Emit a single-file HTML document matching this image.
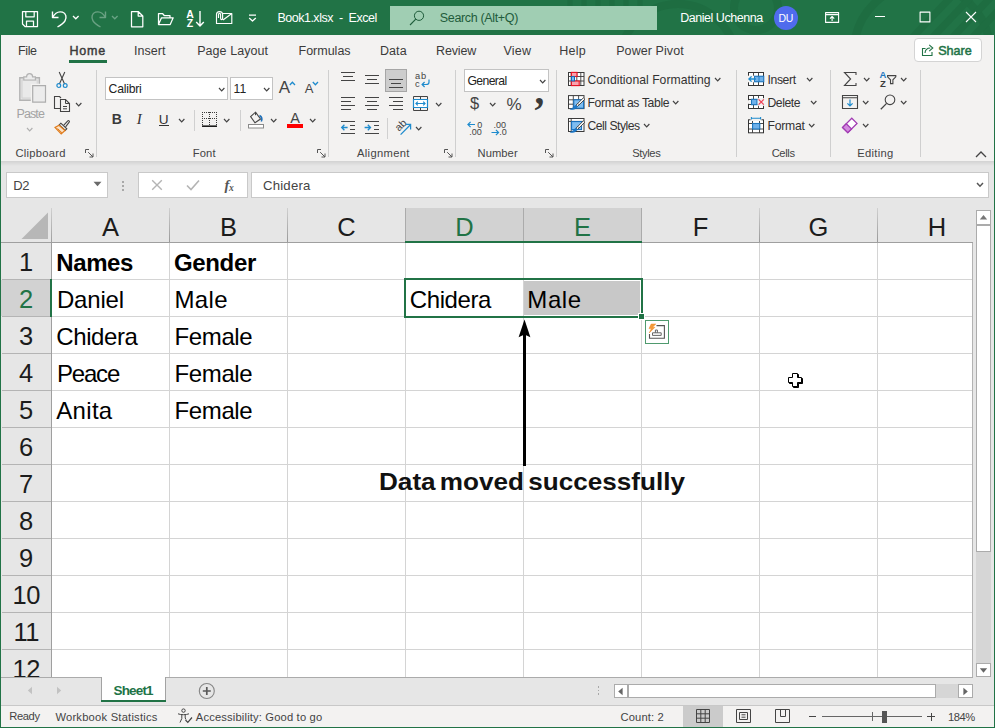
<!DOCTYPE html>
<html><head><meta charset="utf-8"><title>Book1.xlsx - Excel</title>
<style>
*{box-sizing:border-box}
html,body{margin:0;padding:0}
body{width:995px;height:728px;position:relative;overflow:hidden;background:#e6e6e6;font-family:"Liberation Sans",sans-serif;font-size:12px;color:#262626}
.a,.t,svg{position:absolute}
svg{overflow:visible}
.t{white-space:pre;line-height:1}
.c{position:absolute;font-size:24px;line-height:1;white-space:nowrap;color:#000}
</style></head><body>
<div class="a" style="left:0px;top:0px;width:995px;height:35px;background:#217346;"></div>
<svg style="left:560px;top:0px;overflow:hidden" width="435" height="35" viewBox="0 0 435 35"><g fill="none" stroke="#1d6b40" stroke-width="8" opacity="0.75"><circle cx="196" cy="8" r="22"/><circle cx="118" cy="62" r="58"/><circle cx="362" cy="52" r="68"/><path d="M352 38L392 -4M372 38L412 -4M392 38L432 -4M412 38L452 -4" stroke-width="7"/><path d="M10 -2V8M24 -2V8M38 -2V8M52 -2V8M66 -2V8M80 -2V8" stroke-width="5"/></g></svg>
<svg style="left:21px;top:10px" width="18" height="18" viewBox="0 0 18 18" ><path d="M1.5 1.5H16.5V16.5H4L1.5 14Z M4.8 1.5V6.8H13.2V1.5 M5.5 16.5V11H12.5V16.5" fill="none" stroke="#fff" stroke-width="1.25" stroke-linejoin="round" opacity="1"/></svg>
<svg style="left:51px;top:10px" width="17" height="18" viewBox="0 0 17 18" ><path d="M1.5 1.5V7.5H7.5 M1.5 7.5C4 3 8 1.2 11.5 2.2C15 3.3 16 7.5 14 10.8C12.5 13.3 9.5 15.2 6.5 17" fill="none" stroke="#fff" stroke-width="1.4" stroke-linejoin="round" opacity="1"/></svg>
<svg style="left:71.6px;top:15.2px" width="7.6" height="4.8" viewBox="0 0 7.6 4.8" ><path d="M1 1L3.8 3.8L6.6 1" fill="none" stroke="#fff" stroke-width="1.3"/></svg>
<svg style="left:90px;top:10px" width="17" height="18" viewBox="0 0 17 18" ><path d="M15.5 1.5V7.5H9.5 M15.5 7.5C13 3 9 1.2 5.5 2.2C2 3.3 1 7.5 3 10.8C4.5 13.3 7.5 15.2 10.5 17" fill="none" stroke="#fff" stroke-width="1.4" stroke-linejoin="round" opacity="0.33"/></svg>
<svg style="left:111.0px;top:15.2px" width="7.6" height="4.8" viewBox="0 0 7.6 4.8" ><path d="M1 1L3.8 3.8L6.6 1" fill="none" stroke="#6aa385" stroke-width="1.3"/></svg>
<svg style="left:130px;top:10px" width="14" height="18" viewBox="0 0 14 18" ><path d="M1.5 1.5H8.2L12.8 6V16.8H1.5Z M8.2 1.5V6H12.8" fill="none" stroke="#fff" stroke-width="1.25" stroke-linejoin="round" opacity="1"/></svg>
<svg style="left:157px;top:12px" width="18" height="14" viewBox="0 0 18 14" ><path d="M1.5 12.5V1.5H5.5L7.2 3.5H13V5.8 M1.5 12.5L4.5 5.8H16.2L13.2 12.5Z" fill="none" stroke="#fff" stroke-width="1.25" stroke-linejoin="round" opacity="1"/></svg>
<div class="t" style="left:186.30px;top:9.00px;font-size:10.5px;color:#fff;font-weight:700;">A</div>
<div class="t" style="left:186.80px;top:18.00px;font-size:10.5px;color:#fff;font-weight:700;">Z</div>
<svg style="left:195px;top:10px" width="10" height="18" viewBox="0 0 10 18" ><path d="M5 1V16 M1.2 12L5 16L8.8 12" fill="none" stroke="#fff" stroke-width="1.4" stroke-linejoin="round" opacity="1"/></svg>
<svg style="left:215px;top:10px" width="19" height="15" viewBox="0 0 19 15" ><path d="M7.8 3.5H16.8V13.5H1.5V9.8 M16.8 3.5L8 10 M1.5 9.8V4.5C1.5 0.6 7.6 0.6 7.6 4.5V8.3C7.6 10 5.6 10 5.6 8.3V4.8C5.6 2.9 3.5 2.9 3.5 4.8V8" fill="none" stroke="#fff" stroke-width="1.15" stroke-linejoin="round" opacity="1"/></svg>
<svg style="left:248px;top:14px" width="9" height="8" viewBox="0 0 9 8" ><path d="M1 1.2H8 M1.2 4L4.5 7L7.8 4" fill="none" stroke="#fff" stroke-width="1.3" stroke-linejoin="round" opacity="1"/></svg>
<div class="t" style="left:277.40px;top:12.00px;font-size:12.5px;color:#fff;letter-spacing:-0.489px;">Book1.xlsx  -  Excel</div>
<div class="a" style="left:390px;top:6px;width:267px;height:24px;background:#a0ceb3;"></div>
<svg style="left:409px;top:10px" width="16" height="16" viewBox="0 0 16 16" ><circle cx="10" cy="5.8" r="4.6" fill="none" stroke="#1f5c3b" stroke-width="1"/><path d="M6.8 9.2L1 15" stroke="#1f5c3b" stroke-width="1.1"/></svg>
<div class="t" style="left:439.80px;top:12.00px;font-size:12.5px;color:#1f5c3b;letter-spacing:-0.344px;">Search (Alt+Q)</div>
<div class="t" style="left:680.20px;top:12.00px;font-size:12.5px;color:#fff;letter-spacing:-0.461px;">Daniel Uchenna</div>
<div class="a" style="left:774px;top:6px;width:24px;height:24px;background:#4f6bed;border-radius:12px"></div>
<div class="t" style="left:778.50px;top:13.00px;font-size:10.5px;color:#fff;letter-spacing:-0.336px;">DU</div>
<svg style="left:825px;top:12px" width="15" height="12" viewBox="0 0 15 12" ><path d="M0.6 0.6H13.6V10.4H0.6Z M0.6 2.6H13.6" fill="none" stroke="#fff" stroke-width="1.1" stroke-linejoin="round" opacity="1"/><path d="M7.1 9V4.6M5 6.6L7.1 4.5L9.2 6.6" fill="none" stroke="#fff" stroke-width="1.1" stroke-linejoin="round" opacity="1"/></svg>
<div class="a" style="left:874.5px;top:16px;width:10.5px;height:1px;background:#fff;"></div>
<svg style="left:919px;top:11px" width="12" height="12" viewBox="0 0 12 12" ><path d="M1.1 1.1H10.9V10.9H1.1Z" fill="none" stroke="#fff" stroke-width="1.1" stroke-linejoin="round" opacity="1"/></svg>
<svg style="left:965px;top:11px" width="12" height="12" viewBox="0 0 12 12" ><path d="M1 1L11 11M11 1L1 11" fill="none" stroke="#fff" stroke-width="1.1" stroke-linejoin="round" opacity="1"/></svg>
<div class="a" style="left:1px;top:35px;width:993px;height:126px;background:#f3f2f1;"></div>
<div class="a" style="left:1px;top:161px;width:993px;height:5px;background:linear-gradient(#d2d2d2,#e6e6e6);"></div>
<div class="t" style="left:18.10px;top:45.00px;font-size:12.5px;color:#3b3b3b;letter-spacing:-0.439px;">File</div>
<div class="t" style="left:69.50px;top:45.00px;font-size:12.5px;color:#3b3b3b;letter-spacing:0.789px;-webkit-text-stroke:0.45px #3b3b3b;">Home</div>
<div class="a" style="left:69px;top:60px;width:38px;height:3px;background:#217346;"></div>
<div class="t" style="left:133.90px;top:45.00px;font-size:12.5px;color:#3b3b3b;letter-spacing:0.089px;">Insert</div>
<div class="t" style="left:197.20px;top:45.00px;font-size:12.5px;color:#3b3b3b;letter-spacing:0.063px;">Page Layout</div>
<div class="t" style="left:298.50px;top:45.00px;font-size:12.5px;color:#3b3b3b;">Formulas</div>
<div class="t" style="left:379.90px;top:45.00px;font-size:12.5px;color:#3b3b3b;letter-spacing:0.098px;">Data</div>
<div class="t" style="left:436.00px;top:45.00px;font-size:12.5px;color:#3b3b3b;letter-spacing:-0.150px;">Review</div>
<div class="t" style="left:503.60px;top:45.00px;font-size:12.5px;color:#3b3b3b;letter-spacing:0.156px;">View</div>
<div class="t" style="left:559.30px;top:45.00px;font-size:12.5px;color:#3b3b3b;letter-spacing:0.195px;">Help</div>
<div class="t" style="left:616.20px;top:45.00px;font-size:12.5px;color:#3b3b3b;letter-spacing:0.082px;">Power Pivot</div>
<div class="a" style="left:914px;top:38px;width:68px;height:24px;background:#fff;border:1px solid #d4d4d4;border-radius:4px"></div>
<svg style="left:921px;top:43px" width="14" height="14" viewBox="0 0 14 14" ><path d="M4.5 5.5H1.5V12.5H11V9" fill="none" stroke="#217346" stroke-width="1.1"/><path d="M4 10C4.3 6.6 6.5 5 9.3 5" fill="none" stroke="#217346" stroke-width="1.1"/><path d="M8.2 1.8L11.8 5L8.2 8.2" fill="none" stroke="#217346" stroke-width="1.1"/></svg>
<div class="t" style="left:938.20px;top:45.00px;font-size:12.6px;color:#217346;-webkit-text-stroke:0.5px #217346;">Share</div>
<svg style="left:974.5px;top:150px" width="12" height="8" viewBox="0 0 12 8" ><path d="M1 7L6 2L11 7" fill="none" stroke="#444" stroke-width="1.3"/></svg>
<div class="a" style="left:96px;top:70px;width:1px;height:87px;background:#cfcfcf;"></div>
<div class="a" style="left:328px;top:70px;width:1px;height:87px;background:#cfcfcf;"></div>
<div class="a" style="left:455px;top:70px;width:1px;height:87px;background:#cfcfcf;"></div>
<div class="a" style="left:556px;top:70px;width:1px;height:87px;background:#cfcfcf;"></div>
<div class="a" style="left:736px;top:70px;width:1px;height:87px;background:#cfcfcf;"></div>
<div class="a" style="left:830px;top:70px;width:1px;height:87px;background:#cfcfcf;"></div>
<div class="a" style="left:920px;top:70px;width:1px;height:87px;background:#cfcfcf;"></div>
<div class="t" style="left:15.40px;top:148.00px;font-size:11.2px;color:#444;letter-spacing:0.268px;">Clipboard</div>
<div class="t" style="left:192.70px;top:148.00px;font-size:11.2px;color:#444;letter-spacing:0.177px;">Font</div>
<div class="t" style="left:357.00px;top:148.00px;font-size:11.2px;color:#444;letter-spacing:0.328px;">Alignment</div>
<div class="t" style="left:477.50px;top:148.00px;font-size:11.2px;color:#444;letter-spacing:0.067px;">Number</div>
<div class="t" style="left:632.30px;top:148.00px;font-size:11.2px;color:#444;letter-spacing:-0.395px;">Styles</div>
<div class="t" style="left:771.70px;top:148.00px;font-size:11.2px;color:#444;letter-spacing:-0.395px;">Cells</div>
<div class="t" style="left:857.20px;top:148.00px;font-size:11.2px;color:#444;letter-spacing:0.297px;">Editing</div>
<svg style="left:85px;top:149px" width="9" height="9" viewBox="0 0 9 9" ><path d="M0.5 4V0.5H4M3.2 3.2L8 8M8 4.5V8H4.5" fill="none" stroke="#555" stroke-width="1"/></svg>
<svg style="left:317px;top:149px" width="9" height="9" viewBox="0 0 9 9" ><path d="M0.5 4V0.5H4M3.2 3.2L8 8M8 4.5V8H4.5" fill="none" stroke="#555" stroke-width="1"/></svg>
<svg style="left:444px;top:149px" width="9" height="9" viewBox="0 0 9 9" ><path d="M0.5 4V0.5H4M3.2 3.2L8 8M8 4.5V8H4.5" fill="none" stroke="#555" stroke-width="1"/></svg>
<svg style="left:545px;top:149px" width="9" height="9" viewBox="0 0 9 9" ><path d="M0.5 4V0.5H4M3.2 3.2L8 8M8 4.5V8H4.5" fill="none" stroke="#555" stroke-width="1"/></svg>
<svg style="left:18px;top:72px" width="30" height="32" viewBox="0 0 30 32" ><path d="M1.8 5.8H21.4V28.2H1.8Z" fill="#e2e2e2" stroke="#b3b3b3" stroke-width="1.4" /><path d="M4 8H19.2V26H4Z" fill="#e9e9e9" stroke="#d2d2d2" stroke-width="1" /><path d="M5.8 8V4.8H8.6C8.6 0.6 14.6 0.6 14.6 4.8H17.4V8Z" fill="#ececec" stroke="#b3b3b3" stroke-width="1.2" /><path d="M13.6 12.6H28.4V31.2H13.6Z" fill="#f3f2f1" stroke="#f3f2f1" stroke-width="1.6" /><path d="M14.7 13.7H27.5V30.2H14.7Z" fill="#ececec" stroke="#adadad" stroke-width="1.2" /></svg>
<div class="t" style="left:16.50px;top:108.00px;font-size:12.5px;color:#a3a3a3;letter-spacing:-0.894px;">Paste</div>
<svg style="left:25.8px;top:126.9px" width="7.4" height="4.8" viewBox="0 0 7.4 4.8" ><path d="M1 1L3.7 3.8L6.4 1" fill="none" stroke="#b0b0b0" stroke-width="1.2"/></svg>
<svg style="left:56px;top:71px" width="12" height="18" viewBox="0 0 12 18" ><path d="M3.2 1L8.6 13 M8.8 1L3.4 13" fill="none" stroke="#444" stroke-width="1.1" /><circle cx="2.8" cy="14.6" r="1.9" fill="none" stroke="#1e8bcd" stroke-width="1.2"/><circle cx="9.2" cy="14.6" r="1.9" fill="none" stroke="#1e8bcd" stroke-width="1.2"/></svg>
<svg style="left:53px;top:95px" width="18" height="18" viewBox="0 0 18 18" ><path d="M7 13.5H1.5V1.5H6.5L8 3" fill="none" stroke="#444" stroke-width="1.1" /><path d="M7.5 4.5H12.5L16.5 8.5V16.5H7.5Z" fill="#f3f2f1" stroke="#444" stroke-width="1.1" /><path d="M12.5 4.5V8.5H16.5 M10 11.5H14 M10 13.8H14" fill="none" stroke="#444" stroke-width="1" /></svg>
<svg style="left:75.3px;top:101.8px" width="7.4" height="4.8" viewBox="0 0 7.4 4.8" ><path d="M1 1L3.7 3.8L6.4 1" fill="none" stroke="#444" stroke-width="1.2"/></svg>
<svg style="left:54px;top:119px" width="17" height="16" viewBox="0 0 17 16" ><path d="M9.8 6.2L13.8 1.8C14.6 1 16 2.3 15.2 3.2L11.6 7.8" fill="none" stroke="#444" stroke-width="1.1" /><path d="M6.8 4.2L12.8 9.8L11.2 11.5L5.2 6Z" fill="none" stroke="#444" stroke-width="1.1" /><path d="M5 6.2L1 8.5L7.2 15L11 11.5Z" fill="#fbe3c8" stroke="#e07b1a" stroke-width="1.2" /><path d="M3.5 9.5L8 13.8" fill="none" stroke="#e07b1a" stroke-width="1" /></svg>
<div class="a" style="left:105px;top:77px;width:123px;height:23px;background:#fff;border:1px solid #c3c3c3"></div>
<div class="t" style="left:108.60px;top:83.00px;font-size:12.2px;color:#222;letter-spacing:-0.235px;">Calibri</div>
<svg style="left:217.6px;top:87.0px" width="7.4" height="4.8" viewBox="0 0 7.4 4.8" ><path d="M1 1L3.7 3.8L6.4 1" fill="none" stroke="#444" stroke-width="1.2"/></svg>
<div class="a" style="left:230px;top:77px;width:43px;height:23px;background:#fff;border:1px solid #c3c3c3"></div>
<div class="t" style="left:233.50px;top:83.00px;font-size:12.2px;color:#222;letter-spacing:0.172px;">11</div>
<svg style="left:262.5px;top:87.0px" width="7.4" height="4.8" viewBox="0 0 7.4 4.8" ><path d="M1 1L3.7 3.8L6.4 1" fill="none" stroke="#444" stroke-width="1.2"/></svg>
<div class="t" style="left:278.80px;top:79.00px;font-size:17px;color:#444;">A</div>
<svg style="left:288.5px;top:80.5px" width="7" height="5" viewBox="0 0 7 5" ><path d="M0.8 4L3.4 1.2L6 4" fill="none" stroke="#1e8bcd" stroke-width="1.3" /></svg>
<div class="t" style="left:304.80px;top:82.00px;font-size:13px;color:#444;">A</div>
<svg style="left:312.3px;top:81px" width="7" height="5" viewBox="0 0 7 5" ><path d="M0.8 1L3.4 3.8L6 1" fill="none" stroke="#1e8bcd" stroke-width="1.3" /></svg>
<div class="t" style="left:111.80px;top:112.00px;font-size:14px;color:#3a3a3a;font-weight:700;">B</div>
<div class="t" style="left:136.80px;top:112.00px;font-size:15px;color:#333;font-style:italic;font-family:'Liberation Serif',serif;">I</div>
<div class="t" style="left:158.80px;top:113.00px;font-size:13.6px;color:#333;">U</div>
<div class="a" style="left:159px;top:125px;width:9.5px;height:1px;background:#333;"></div>
<svg style="left:177.6px;top:118.0px" width="7.4" height="4.8" viewBox="0 0 7.4 4.8" ><path d="M1 1L3.7 3.8L6.4 1" fill="none" stroke="#444" stroke-width="1.2"/></svg>
<div class="a" style="left:194px;top:110px;width:1px;height:21px;background:#d0d0d0;"></div>
<svg style="left:202px;top:112px" width="15" height="16" viewBox="0 0 15 16" ><path d="M0 0.5H15M0 6.5H15M0.5 0V13M7.5 0V13M14.5 0V13" fill="none" stroke="#3a3a3a" stroke-width="1" stroke-dasharray="1 1" shape-rendering="crispEdges"/><path d="M0 14.2H15" stroke="#1a1a1a" stroke-width="1.6"/></svg>
<svg style="left:223.3px;top:118.0px" width="7.4" height="4.8" viewBox="0 0 7.4 4.8" ><path d="M1 1L3.7 3.8L6.4 1" fill="none" stroke="#444" stroke-width="1.2"/></svg>
<div class="a" style="left:240px;top:110px;width:1px;height:21px;background:#d0d0d0;"></div>
<svg style="left:247px;top:111px" width="18" height="18" viewBox="0 0 18 18" ><path d="M8.5 1.2L13.5 8L8 11.8L3.6 5.5Z" fill="none" stroke="#444" stroke-width="1.1" /><path d="M8.5 1.2V4.2" fill="none" stroke="#444" stroke-width="1" /><path d="M12.5 4.5C15 6 15.2 8.5 14.3 10.5" fill="none" stroke="#1e6fb8" stroke-width="1.6" /><rect x="1.5" y="13.5" width="15" height="3.5" fill="#fff" stroke="#8a8a8a" stroke-width="1"/></svg>
<svg style="left:269.7px;top:118.0px" width="7.4" height="4.8" viewBox="0 0 7.4 4.8" ><path d="M1 1L3.7 3.8L6.4 1" fill="none" stroke="#444" stroke-width="1.2"/></svg>
<div class="t" style="left:290.20px;top:111.00px;font-size:14.5px;color:#444;">A</div>
<div class="a" style="left:287px;top:124px;width:16px;height:4px;background:#ff0000;"></div>
<svg style="left:308.8px;top:118.0px" width="7.4" height="4.8" viewBox="0 0 7.4 4.8" ><path d="M1 1L3.7 3.8L6.4 1" fill="none" stroke="#444" stroke-width="1.2"/></svg>
<div class="a" style="left:341px;top:72px;width:14px;height:1px;background:#444;"></div>
<div class="a" style="left:343px;top:76px;width:10px;height:1px;background:#444;"></div>
<div class="a" style="left:341px;top:80px;width:14px;height:1px;background:#444;"></div>
<div class="a" style="left:365px;top:75px;width:14px;height:1px;background:#444;"></div>
<div class="a" style="left:367px;top:79px;width:10px;height:1px;background:#444;"></div>
<div class="a" style="left:365px;top:83px;width:14px;height:1px;background:#444;"></div>
<div class="a" style="left:385px;top:69px;width:22px;height:23px;background:#cdcdcd;border:1px solid #a6a6a6"></div>
<div class="a" style="left:389px;top:79px;width:14px;height:1px;background:#444;"></div>
<div class="a" style="left:391px;top:83px;width:10px;height:1px;background:#444;"></div>
<div class="a" style="left:389px;top:87px;width:14px;height:1px;background:#444;"></div>
<div class="t" style="left:415.00px;top:72.00px;font-size:9.3px;color:#444;letter-spacing:0.928px;">ab</div>
<div class="t" style="left:415.00px;top:80.00px;font-size:9.3px;color:#444;">c</div>
<svg style="left:421px;top:79px" width="9" height="9" viewBox="0 0 9 9" ><path d="M8 0.5V3.2C8 5.2 6.5 5.5 5 5.5H1.2 M3.6 3L1.1 5.5L3.6 8" fill="none" stroke="#1e8bcd" stroke-width="1.2" /></svg>
<div class="a" style="left:341px;top:97px;width:14px;height:1px;background:#444;"></div>
<div class="a" style="left:341px;top:101px;width:10px;height:1px;background:#444;"></div>
<div class="a" style="left:341px;top:105px;width:14px;height:1px;background:#444;"></div>
<div class="a" style="left:341px;top:109px;width:10px;height:1px;background:#444;"></div>
<div class="a" style="left:365px;top:97px;width:14px;height:1px;background:#444;"></div>
<div class="a" style="left:367px;top:101px;width:10px;height:1px;background:#444;"></div>
<div class="a" style="left:365px;top:105px;width:14px;height:1px;background:#444;"></div>
<div class="a" style="left:367px;top:109px;width:10px;height:1px;background:#444;"></div>
<div class="a" style="left:389px;top:97px;width:14px;height:1px;background:#444;"></div>
<div class="a" style="left:393px;top:101px;width:10px;height:1px;background:#444;"></div>
<div class="a" style="left:389px;top:105px;width:14px;height:1px;background:#444;"></div>
<div class="a" style="left:393px;top:109px;width:10px;height:1px;background:#444;"></div>
<svg style="left:413px;top:96px" width="16" height="15" viewBox="0 0 16 15" ><path d="M0.5 0.5H14.5V14.5H0.5Z M7.5 0.5V3.5 M7.5 11.5V14.5" fill="none" stroke="#444" stroke-width="1" /><path d="M0.5 3.5H14.5V11.5H0.5Z" fill="#fff" stroke="#1e8bcd" stroke-width="1.2" /><path d="M3 7.5H12 M4.8 5.6L2.9 7.5L4.8 9.4 M10.2 5.6L12.1 7.5L10.2 9.4" fill="none" stroke="#1e8bcd" stroke-width="1.1" /></svg>
<svg style="left:434.8px;top:101.9px" width="7.4" height="4.8" viewBox="0 0 7.4 4.8" ><path d="M1 1L3.7 3.8L6.4 1" fill="none" stroke="#444" stroke-width="1.2"/></svg>
<div class="a" style="left:341px;top:121px;width:14px;height:1px;background:#444;"></div>
<div class="a" style="left:350px;top:125px;width:5px;height:1px;background:#444;"></div>
<div class="a" style="left:350px;top:129px;width:5px;height:1px;background:#444;"></div>
<div class="a" style="left:341px;top:133px;width:14px;height:1px;background:#444;"></div>
<svg style="left:341px;top:123px" width="8" height="9" viewBox="0 0 8 9" ><path d="M0.8 4.5H6.6 M3.4 1.8L0.7 4.5L3.4 7.2" fill="none" stroke="#1e8bcd" stroke-width="1.3" /></svg>
<div class="a" style="left:365px;top:121px;width:14px;height:1px;background:#444;"></div>
<div class="a" style="left:374px;top:125px;width:5px;height:1px;background:#444;"></div>
<div class="a" style="left:374px;top:129px;width:5px;height:1px;background:#444;"></div>
<div class="a" style="left:365px;top:133px;width:14px;height:1px;background:#444;"></div>
<svg style="left:364px;top:123px" width="8" height="9" viewBox="0 0 8 9" ><path d="M0.6 4.5H6.4 M3.8 1.8L6.5 4.5L3.8 7.2" fill="none" stroke="#1e8bcd" stroke-width="1.3" /></svg>
<div class="a" style="left:387px;top:118px;width:1px;height:21px;background:#d0d0d0;"></div>
<div class="t" style="left:394.5px;top:119.5px;width:11px;height:11px;font-size:10.5px;line-height:11px;text-align:center;color:#444;transform:rotate(-45deg)">ab</div>
<svg style="left:399px;top:122px" width="13" height="14" viewBox="0 0 13 14" ><path d="M1.6 12.6L11.4 2.8 M6.4 2.4H11.6V7.6" fill="none" stroke="#1e8bcd" stroke-width="1.25" /></svg>
<svg style="left:414.9px;top:126.0px" width="7.4" height="4.8" viewBox="0 0 7.4 4.8" ><path d="M1 1L3.7 3.8L6.4 1" fill="none" stroke="#444" stroke-width="1.2"/></svg>
<div class="a" style="left:464px;top:69px;width:85px;height:23px;background:#fff;border:1px solid #c3c3c3"></div>
<div class="t" style="left:467.40px;top:75.00px;font-size:12.2px;color:#222;letter-spacing:-0.594px;">General</div>
<svg style="left:538.6px;top:78.8px" width="7.4" height="4.8" viewBox="0 0 7.4 4.8" ><path d="M1 1L3.7 3.8L6.4 1" fill="none" stroke="#444" stroke-width="1.2"/></svg>
<div class="t" style="left:470.00px;top:95.00px;font-size:16.5px;color:#444;">$</div>
<svg style="left:488.6px;top:101.8px" width="7.4" height="4.8" viewBox="0 0 7.4 4.8" ><path d="M1 1L3.7 3.8L6.4 1" fill="none" stroke="#444" stroke-width="1.2"/></svg>
<div class="t" style="left:506.60px;top:96.00px;font-size:17px;color:#444;letter-spacing:-0.325px;">%</div>
<div class="t" style="left:534.60px;top:71.00px;font-size:39px;color:#3a3a3a;font-weight:700;font-family:'Liberation Serif',serif;">,</div>
<div class="t" style="left:477.20px;top:121.00px;font-size:9px;color:#444;">0</div>
<div class="t" style="left:469.20px;top:128.00px;font-size:9px;color:#444;">.00</div>
<svg style="left:466.5px;top:121px" width="9" height="7" viewBox="0 0 9 7" ><path d="M1 3.5H8 M3.6 0.8L0.9 3.5L3.6 6.2" fill="none" stroke="#1e8bcd" stroke-width="1.2" /></svg>
<div class="t" style="left:493.50px;top:121.00px;font-size:9px;color:#444;">.00</div>
<div class="t" style="left:499.30px;top:128.00px;font-size:9px;color:#444;">.0</div>
<svg style="left:490.5px;top:128.5px" width="9" height="7" viewBox="0 0 9 7" ><path d="M0.5 3.5H7.5 M4.9 0.8L7.6 3.5L4.9 6.2" fill="none" stroke="#1e8bcd" stroke-width="1.2" /></svg>
<svg style="left:568px;top:72px" width="17" height="14" viewBox="0 0 17 14" ><rect x="0.5" y="0.5" width="15.5" height="13" fill="#fff" stroke="#3b3b3b"/><path d="M3.2 0.5V13.5M8.8 0.5V13.5M12.8 0.5V13.5M0.5 4.5H16M0.5 9H16" fill="none" stroke="#3b3b3b" stroke-width="0.9" /><rect x="3.4" y="0.4" width="5.6" height="4.1" fill="#f9a3ad" stroke="#e81123" stroke-width="1.1"/><rect x="3.4" y="9" width="7.8" height="4.6" fill="#f9a3ad" stroke="#e81123" stroke-width="1.1"/><rect x="3.5" y="4.6" width="3" height="4.3" fill="#7fbdf0" stroke="#0f6cbd" stroke-width="1"/></svg>
<div class="t" style="left:587.50px;top:74.00px;font-size:12.2px;color:#333;letter-spacing:0.022px;">Conditional Formatting</div>
<svg style="left:713.6px;top:77.4px" width="7.4" height="4.8" viewBox="0 0 7.4 4.8" ><path d="M1 1L3.7 3.8L6.4 1" fill="none" stroke="#444" stroke-width="1.2"/></svg>
<svg style="left:568px;top:95px" width="18" height="16" viewBox="0 0 18 16" ><rect x="0.5" y="0.6" width="15.5" height="13" fill="#fff" stroke="#3b3b3b"/><path d="M5.3 0.6V13.6M10.6 0.6V4.8M0.5 4.8H16M0.5 9.2H5.3" fill="none" stroke="#3b3b3b" stroke-width="0.9" /><rect x="5.8" y="4.8" width="9.8" height="8.4" fill="#7fbdf0" stroke="#0f6cbd" stroke-width="1"/><path d="M16.8 4.2L9.6 11.4L8.2 10L15.4 2.8Z" fill="#fff" stroke="#3b3b3b" stroke-width="0.9" /><path d="M11.2 9.8L9.8 8.4" fill="none" stroke="#3b3b3b" stroke-width="0.8" /><path d="M2.2 14.2C5 15 8 14.2 9.4 11.6L8 10.2C6.4 10.4 5.6 13.2 2.2 14.2Z" fill="#1e78c8" stroke="#0f6cbd" stroke-width="0.5" /></svg>
<div class="t" style="left:587.50px;top:97.00px;font-size:12.2px;color:#333;letter-spacing:-0.364px;">Format as Table</div>
<svg style="left:672.0px;top:99.7px" width="7.4" height="4.8" viewBox="0 0 7.4 4.8" ><path d="M1 1L3.7 3.8L6.4 1" fill="none" stroke="#444" stroke-width="1.2"/></svg>
<svg style="left:568px;top:118px" width="18" height="16" viewBox="0 0 18 16" ><rect x="0.5" y="0.5" width="15.5" height="13" fill="#fff" stroke="#3b3b3b"/><path d="M3.2 0.5V13.5M0.5 3.4H16" fill="none" stroke="#3b3b3b" stroke-width="0.9" /><rect x="3.6" y="3.6" width="10" height="8" fill="#7fbdf0" stroke="#0f6cbd" stroke-width="1"/><path d="M16.8 4.2L9.6 11.4L8.2 10L15.4 2.8Z" fill="#fff" stroke="#3b3b3b" stroke-width="0.9" /><path d="M11.2 9.8L9.8 8.4" fill="none" stroke="#3b3b3b" stroke-width="0.8" /><path d="M2.2 14.2C5 15 8 14.2 9.4 11.6L8 10.2C6.4 10.4 5.6 13.2 2.2 14.2Z" fill="#1e78c8" stroke="#0f6cbd" stroke-width="0.5" /></svg>
<div class="t" style="left:587.50px;top:120.00px;font-size:12.2px;color:#333;letter-spacing:-0.498px;">Cell Styles</div>
<svg style="left:643.0px;top:123.4px" width="7.4" height="4.8" viewBox="0 0 7.4 4.8" ><path d="M1 1L3.7 3.8L6.4 1" fill="none" stroke="#444" stroke-width="1.2"/></svg>
<svg style="left:748px;top:72px" width="17" height="14" viewBox="0 0 17 14" ><rect x="0.5" y="0.5" width="15" height="13" fill="#fff" stroke="#333"/><path d="M5.5 0.5V13.5M10.5 0.5V13.5M0.5 4.5H15.5M0.5 9.5H15.5" fill="none" stroke="#333" stroke-width="0.9" /><rect x="-0.5" y="3.7" width="7" height="6.6" fill="#f3f2f1"/><rect x="6.5" y="4.2" width="9.3" height="5.6" fill="#6fb1ea" stroke="#1e78c0" stroke-width="1"/><path d="M11 4.2V9.8" fill="none" stroke="#1e78c0" stroke-width="0.9" /><path d="M0.8 7H8 M3.6 4.4L0.9 7L3.6 9.6" fill="none" stroke="#1e8bcd" stroke-width="1.3" /></svg>
<div class="t" style="left:767.50px;top:74.00px;font-size:12.2px;color:#333;letter-spacing:-0.381px;">Insert</div>
<svg style="left:805.8px;top:77.4px" width="7.4" height="4.8" viewBox="0 0 7.4 4.8" ><path d="M1 1L3.7 3.8L6.4 1" fill="none" stroke="#444" stroke-width="1.2"/></svg>
<svg style="left:748px;top:95px" width="17" height="15" viewBox="0 0 17 15" ><rect x="0.5" y="0.5" width="15" height="13" fill="#fff" stroke="#333"/><path d="M5.5 0.5V13.5M10.5 0.5V13.5M0.5 4.5H15.5M0.5 9.5H15.5" fill="none" stroke="#333" stroke-width="0.9" /><rect x="9.3" y="3.2" width="7.5" height="7.6" fill="#f3f2f1"/><rect x="-0.5" y="5.2" width="3" height="3.6" fill="#f3f2f1"/><rect x="3.5" y="4.3" width="5.4" height="5.4" fill="#6fb1ea" stroke="#1e78c0" stroke-width="1.1"/><path d="M10.6 4.4L15.8 9.6M15.8 4.4L10.6 9.6" fill="none" stroke="#ef4056" stroke-width="1.3" /></svg>
<div class="t" style="left:767.50px;top:97.00px;font-size:12.2px;color:#333;letter-spacing:-0.456px;">Delete</div>
<svg style="left:809.6px;top:99.7px" width="7.4" height="4.8" viewBox="0 0 7.4 4.8" ><path d="M1 1L3.7 3.8L6.4 1" fill="none" stroke="#444" stroke-width="1.2"/></svg>
<svg style="left:748px;top:117px" width="17" height="17" viewBox="0 0 17 17" ><rect x="0.5" y="2.8" width="15" height="13" fill="#fff" stroke="#333"/><path d="M4.5 2.8V15.8M11.5 2.8V15.8M0.5 6.5H15.5M0.5 12H15.5" fill="none" stroke="#333" stroke-width="0.9" /><rect x="2.5" y="0" width="11" height="4" fill="#f3f2f1"/><rect x="4.6" y="6.5" width="7.2" height="5.5" fill="#6fb1ea" stroke="#1e78c0" stroke-width="1.1"/><path d="M3.4 1.3H12.6M3.4 0V2.6M12.6 0V2.6" fill="none" stroke="#1e8bcd" stroke-width="1.1" /></svg>
<div class="t" style="left:767.50px;top:120.00px;font-size:12.2px;color:#333;letter-spacing:-0.235px;">Format</div>
<svg style="left:807.7px;top:123.4px" width="7.4" height="4.8" viewBox="0 0 7.4 4.8" ><path d="M1 1L3.7 3.8L6.4 1" fill="none" stroke="#444" stroke-width="1.2"/></svg>
<svg style="left:843px;top:72px" width="14" height="14" viewBox="0 0 14 14" ><path d="M13 3V0.5H1.5L7.6 7L1.5 13.5H13V11" fill="none" stroke="#444" stroke-width="1.1" /></svg>
<svg style="left:863.3px;top:77.4px" width="7.4" height="4.8" viewBox="0 0 7.4 4.8" ><path d="M1 1L3.7 3.8L6.4 1" fill="none" stroke="#444" stroke-width="1.2"/></svg>
<div class="t" style="left:879.60px;top:70.00px;font-size:9.5px;color:#1e78c0;font-weight:700;">A</div>
<div class="t" style="left:879.90px;top:79.00px;font-size:9.5px;color:#3b3b3b;font-weight:700;">Z</div>
<svg style="left:887px;top:75px" width="10" height="10" viewBox="0 0 10 10" ><path d="M0.6 0.6H8.8V1.8L5.9 4.8V8.6H3.5V4.8L0.6 1.8Z" fill="none" stroke="#444" stroke-width="1.1" /></svg>
<svg style="left:899.7px;top:77.4px" width="7.4" height="4.8" viewBox="0 0 7.4 4.8" ><path d="M1 1L3.7 3.8L6.4 1" fill="none" stroke="#444" stroke-width="1.2"/></svg>
<svg style="left:842px;top:95px" width="16" height="14" viewBox="0 0 16 14" ><path d="M0.5 0.5H15.5V13.5H0.5ZM0.5 2.8H15.5" fill="none" stroke="#444" stroke-width="1.1" /><path d="M8 4.5V11 M5.4 8.4L8 11L10.6 8.4" fill="none" stroke="#1e8bcd" stroke-width="1.2" /></svg>
<svg style="left:861.7px;top:99.7px" width="7.4" height="4.8" viewBox="0 0 7.4 4.8" ><path d="M1 1L3.7 3.8L6.4 1" fill="none" stroke="#444" stroke-width="1.2"/></svg>
<svg style="left:880px;top:94px" width="16" height="16" viewBox="0 0 16 16" ><circle cx="10" cy="5.8" r="4.8" fill="none" stroke="#444" stroke-width="1.1"/><path d="M6.6 9.4L0.8 15.2" fill="none" stroke="#444" stroke-width="1.3" /></svg>
<svg style="left:899.7px;top:99.7px" width="7.4" height="4.8" viewBox="0 0 7.4 4.8" ><path d="M1 1L3.7 3.8L6.4 1" fill="none" stroke="#444" stroke-width="1.2"/></svg>
<svg style="left:841px;top:117px" width="17" height="17" viewBox="0 0 17 17" ><path d="M10.8 1.2L16 6.4L6.8 15.6L1.6 10.4Z" fill="#fff" stroke="#a13bb3" stroke-width="1.3" /><path d="M5.3 6.7L10.5 11.9L6.8 15.6L1.6 10.4Z" fill="#d48ae0" stroke="#a13bb3" stroke-width="1.3" /></svg>
<svg style="left:861.7px;top:123.4px" width="7.4" height="4.8" viewBox="0 0 7.4 4.8" ><path d="M1 1L3.7 3.8L6.4 1" fill="none" stroke="#444" stroke-width="1.2"/></svg>
<div class="a" style="left:6px;top:172px;width:102px;height:26px;background:#fff;border:1px solid #c9c9c9"></div>
<div class="t" style="left:13.30px;top:179.00px;font-size:13px;color:#444;letter-spacing:-0.412px;">D2</div>
<svg style="left:93px;top:181px" width="9" height="6" viewBox="0 0 9 6" ><path d="M0.5 0.8H8.5L4.5 5.2Z" fill="#6a6a6a"/></svg>
<div class="a" style="left:122px;top:180.5px;width:2px;height:2px;background:#a8a8a8;"></div>
<div class="a" style="left:122px;top:184.5px;width:2px;height:2px;background:#a8a8a8;"></div>
<div class="a" style="left:122px;top:188.5px;width:2px;height:2px;background:#a8a8a8;"></div>
<div class="a" style="left:138px;top:172px;width:110px;height:26px;background:#fff;border:1px solid #c9c9c9"></div>
<svg style="left:151px;top:179px" width="12" height="12" viewBox="0 0 12 12" ><path d="M1.2 1.2L10.8 10.8M10.8 1.2L1.2 10.8" fill="none" stroke="#b4b4b4" stroke-width="1.4" /></svg>
<svg style="left:186px;top:179px" width="14" height="12" viewBox="0 0 14 12" ><path d="M1 6.5L5 10.5L13 1.5" fill="none" stroke="#b4b4b4" stroke-width="1.6" /></svg>
<div class="t" style="left:224.50px;top:178.00px;font-size:14.5px;color:#555;font-weight:700;font-style:italic;font-family:'Liberation Serif',serif;">f</div>
<div class="t" style="left:229.00px;top:184.00px;font-size:9.5px;color:#555;font-weight:700;font-style:italic;font-family:'Liberation Serif',serif;">x</div>
<div class="a" style="left:251px;top:172px;width:738px;height:26px;background:#fff;border:1px solid #c9c9c9"></div>
<div class="t" style="left:262.90px;top:179.00px;font-size:13.2px;color:#444;letter-spacing:0.216px;">Chidera</div>
<svg style="left:975.5px;top:181.9px" width="8" height="5.2" viewBox="0 0 8 5.2" ><path d="M1 1L4.0 4.2L7 1" fill="none" stroke="#555" stroke-width="1.5"/></svg>
<div class="a" style="left:52px;top:243px;width:921px;height:434px;background:#fff;"></div>
<div class="a" style="left:406px;top:208px;width:236px;height:34px;background:#d2d2d2;"></div>
<div class="a" style="left:1px;top:280px;width:50px;height:36px;background:#d2d2d2;"></div>
<div class="a" style="left:169px;top:243px;width:1px;height:434px;background:#d4d4d4;"></div>
<div class="a" style="left:169px;top:208px;width:1px;height:34px;background:linear-gradient(#d0d0d0,#999);"></div>
<div class="a" style="left:287px;top:243px;width:1px;height:434px;background:#d4d4d4;"></div>
<div class="a" style="left:287px;top:208px;width:1px;height:34px;background:linear-gradient(#d0d0d0,#999);"></div>
<div class="a" style="left:405px;top:243px;width:1px;height:434px;background:#d4d4d4;"></div>
<div class="a" style="left:405px;top:208px;width:1px;height:34px;background:#ababab;"></div>
<div class="a" style="left:523px;top:243px;width:1px;height:434px;background:#d4d4d4;"></div>
<div class="a" style="left:523px;top:208px;width:1px;height:34px;background:#ababab;"></div>
<div class="a" style="left:641px;top:243px;width:1px;height:434px;background:#d4d4d4;"></div>
<div class="a" style="left:641px;top:208px;width:1px;height:34px;background:#ababab;"></div>
<div class="a" style="left:759px;top:243px;width:1px;height:434px;background:#d4d4d4;"></div>
<div class="a" style="left:759px;top:208px;width:1px;height:34px;background:linear-gradient(#d0d0d0,#999);"></div>
<div class="a" style="left:877px;top:243px;width:1px;height:434px;background:#d4d4d4;"></div>
<div class="a" style="left:877px;top:208px;width:1px;height:34px;background:linear-gradient(#d0d0d0,#999);"></div>
<div class="a" style="left:52px;top:279px;width:921px;height:1px;background:#d4d4d4;"></div>
<div class="a" style="left:2px;top:279px;width:49px;height:1px;background:#b4b4b4;"></div>
<div class="a" style="left:52px;top:316px;width:921px;height:1px;background:#d4d4d4;"></div>
<div class="a" style="left:2px;top:316px;width:49px;height:1px;background:#b4b4b4;"></div>
<div class="a" style="left:52px;top:353px;width:921px;height:1px;background:#d4d4d4;"></div>
<div class="a" style="left:2px;top:353px;width:49px;height:1px;background:#b4b4b4;"></div>
<div class="a" style="left:52px;top:390px;width:921px;height:1px;background:#d4d4d4;"></div>
<div class="a" style="left:2px;top:390px;width:49px;height:1px;background:#b4b4b4;"></div>
<div class="a" style="left:52px;top:427px;width:921px;height:1px;background:#d4d4d4;"></div>
<div class="a" style="left:2px;top:427px;width:49px;height:1px;background:#b4b4b4;"></div>
<div class="a" style="left:52px;top:464px;width:921px;height:1px;background:#d4d4d4;"></div>
<div class="a" style="left:2px;top:464px;width:49px;height:1px;background:#b4b4b4;"></div>
<div class="a" style="left:52px;top:501px;width:921px;height:1px;background:#d4d4d4;"></div>
<div class="a" style="left:2px;top:501px;width:49px;height:1px;background:#b4b4b4;"></div>
<div class="a" style="left:52px;top:538px;width:921px;height:1px;background:#d4d4d4;"></div>
<div class="a" style="left:2px;top:538px;width:49px;height:1px;background:#b4b4b4;"></div>
<div class="a" style="left:52px;top:575px;width:921px;height:1px;background:#d4d4d4;"></div>
<div class="a" style="left:2px;top:575px;width:49px;height:1px;background:#b4b4b4;"></div>
<div class="a" style="left:52px;top:612px;width:921px;height:1px;background:#d4d4d4;"></div>
<div class="a" style="left:2px;top:612px;width:49px;height:1px;background:#b4b4b4;"></div>
<div class="a" style="left:52px;top:649px;width:921px;height:1px;background:#d4d4d4;"></div>
<div class="a" style="left:2px;top:649px;width:49px;height:1px;background:#b4b4b4;"></div>
<div class="a" style="left:1px;top:242px;width:972px;height:1px;background:#9f9f9f;"></div>
<div class="a" style="left:51px;top:208px;width:1px;height:469px;background:linear-gradient(#d0d0d0,#9f9f9f 34px);"></div>
<div class="a" style="left:972px;top:243px;width:1px;height:434px;background:#b3b3b3;"></div>
<div class="a" style="left:405px;top:241px;width:237px;height:2px;background:#217346;"></div>
<div class="a" style="left:50px;top:279px;width:2px;height:38px;background:#217346;"></div>
<svg style="left:20px;top:211px" width="30" height="30" viewBox="0 0 30 30" ><path d="M28 1.5V28H1.5Z" fill="#b7b7b7"/></svg>
<div class="t" style="left:101.99px;top:215.00px;font-size:25.5px;color:#1c1c1c;">A</div>
<div class="t" style="left:219.99px;top:215.00px;font-size:25.5px;color:#1c1c1c;">B</div>
<div class="t" style="left:337.29px;top:215.00px;font-size:25.5px;color:#1c1c1c;">C</div>
<div class="t" style="left:455.29px;top:215.00px;font-size:25.5px;color:#217346;">D</div>
<div class="t" style="left:573.99px;top:215.00px;font-size:25.5px;color:#217346;">E</div>
<div class="t" style="left:692.71px;top:215.00px;font-size:25.5px;color:#1c1c1c;">F</div>
<div class="t" style="left:808.58px;top:215.00px;font-size:25.5px;color:#1c1c1c;">G</div>
<div class="t" style="left:927.79px;top:215.00px;font-size:25.5px;color:#1c1c1c;">H</div>
<div class="t" style="left:19.11px;top:250.00px;font-size:25.5px;color:#1c1c1c;">1</div>
<div class="t" style="left:19.11px;top:287.00px;font-size:25.5px;color:#217346;">2</div>
<div class="t" style="left:19.11px;top:324.00px;font-size:25.5px;color:#1c1c1c;">3</div>
<div class="t" style="left:19.11px;top:361.00px;font-size:25.5px;color:#1c1c1c;">4</div>
<div class="t" style="left:19.11px;top:398.00px;font-size:25.5px;color:#1c1c1c;">5</div>
<div class="t" style="left:19.11px;top:435.00px;font-size:25.5px;color:#1c1c1c;">6</div>
<div class="t" style="left:19.11px;top:472.00px;font-size:25.5px;color:#1c1c1c;">7</div>
<div class="t" style="left:19.11px;top:509.00px;font-size:25.5px;color:#1c1c1c;">8</div>
<div class="t" style="left:19.11px;top:546.00px;font-size:25.5px;color:#1c1c1c;">9</div>
<div class="t" style="left:12.61px;top:583.00px;font-size:25.5px;color:#1c1c1c;letter-spacing:-0.600px;">10</div>
<div class="t" style="left:13.56px;top:620.00px;font-size:25.5px;color:#1c1c1c;letter-spacing:-0.600px;">11</div>
<div class="t" style="left:12.61px;top:657.00px;font-size:25.5px;color:#1c1c1c;letter-spacing:-0.600px;">12</div>
<div class="t" style="left:56.30px;top:251.00px;font-size:24px;color:#000;font-weight:700;letter-spacing:-0.404px;">Names</div>
<div class="t" style="left:173.90px;top:251.00px;font-size:24px;color:#000;font-weight:700;letter-spacing:-0.322px;">Gender</div>
<div class="t" style="left:56.90px;top:288.00px;font-size:24px;color:#000;letter-spacing:-0.174px;">Daniel</div>
<div class="t" style="left:174.50px;top:288.00px;font-size:24px;color:#000;letter-spacing:0.342px;">Male</div>
<div class="t" style="left:56.30px;top:325.00px;font-size:24px;color:#000;letter-spacing:-0.407px;">Chidera</div>
<div class="t" style="left:174.50px;top:325.00px;font-size:24px;color:#000;letter-spacing:-0.372px;">Female</div>
<div class="t" style="left:56.90px;top:362.00px;font-size:24px;color:#000;letter-spacing:-1.172px;">Peace</div>
<div class="t" style="left:174.50px;top:362.00px;font-size:24px;color:#000;letter-spacing:-0.372px;">Female</div>
<div class="t" style="left:56.30px;top:399.00px;font-size:24px;color:#000;letter-spacing:0.299px;">Anita</div>
<div class="t" style="left:174.50px;top:399.00px;font-size:24px;color:#000;letter-spacing:-0.372px;">Female</div>
<div class="a" style="left:524px;top:281px;width:116px;height:34px;background:#c8c8c8;"></div>
<div class="a" style="left:404px;top:278px;width:239px;height:40px;background:transparent;border:2px solid #217346"></div>
<div class="a" style="left:638px;top:313px;width:7px;height:7px;background:#217346;border:1px solid #fff"></div>
<div class="t" style="left:409.85px;top:288.00px;font-size:24px;color:#000;letter-spacing:-0.414px;">Chidera</div>
<div class="t" style="left:527.30px;top:288.00px;font-size:24px;color:#000;letter-spacing:0.592px;">Male</div>
<div class="a" style="left:645px;top:320px;width:24px;height:24px;background:#fff;border:1px solid #4f9a6e"></div>
<svg style="left:645px;top:320px" width="24" height="24" viewBox="0 0 24 24" ><path d="M11.5 5.6H19.4V18.3H4.5V14" fill="none" stroke="#555" stroke-width="1.1" /><path d="M7.5 12.8H16.2V15.4H7.5Z M10.4 12.8V10H12.4V12.8" fill="none" stroke="#666" stroke-width="1" /><path d="M6.2 4L4 8.6H6.4L4.2 13L10 7.2H7.6L10.8 4Z" fill="#f39a3a" stroke="#f08a24" stroke-width="0.5" /></svg>
<div class="a" style="left:523px;top:333px;width:3px;height:133px;background:#000;"></div>
<svg style="left:514px;top:318px" width="22" height="22" viewBox="0 0 22 22" ><path d="M10.5 1.5L16.4 19.3L10.5 16.6L4.6 19.3Z" fill="#000"/></svg>
<div class="t" style="left:379px;top:470px;font-size:24px;font-weight:700;color:#111;word-spacing:-2.8px;transform:scaleX(1.0882);transform-origin:0 0">Data moved successfully</div>
<svg style="left:788px;top:373px" width="16" height="16" viewBox="0 0 16 16" ><path d="M5.5 1.5H10.5V5.5H14.5V10.5H10.5V14.5H5.5V10.5H1.5V5.5H5.5Z" fill="#000" stroke="#000" stroke-width="1"/><path d="M4.5 0.5H9.5V4.5H13.5V9.5H9.5V13.5H4.5V9.5H0.5V4.5H4.5Z" fill="#fff" stroke="#000" stroke-width="1"/></svg>
<div class="a" style="left:976px;top:210px;width:15px;height:15px;background:#fff;border:1px solid #ababab"></div>
<svg style="left:979px;top:214px" width="9" height="7" viewBox="0 0 9 7" ><path d="M0.8 5.5H8.2L4.5 1Z" fill="#777"/></svg>
<div class="a" style="left:976px;top:225px;width:15px;height:327px;background:#fff;border:1px solid #ababab"></div>
<div class="a" style="left:976px;top:552px;width:15px;height:111px;background:#d6d6d6;"></div>
<div class="a" style="left:976px;top:663px;width:15px;height:14px;background:#fff;border:1px solid #ababab"></div>
<svg style="left:979px;top:667px" width="9" height="7" viewBox="0 0 9 7" ><path d="M0.8 1.2H8.2L4.5 5.8Z" fill="#666"/></svg>
<div class="a" style="left:1px;top:677px;width:993px;height:28px;background:#e6e6e6;"></div>
<div class="a" style="left:1px;top:677px;width:972px;height:1px;background:#ababab;"></div>
<svg style="left:27px;top:686px" width="6" height="9" viewBox="0 0 6 9" ><path d="M5 0.8V8.2L0.8 4.5Z" fill="#c2c2c2"/></svg>
<svg style="left:56px;top:686px" width="6" height="9" viewBox="0 0 6 9" ><path d="M1 0.8V8.2L5.2 4.5Z" fill="#c2c2c2"/></svg>
<div class="a" style="left:101px;top:677px;width:65px;height:25px;background:#fff;border-left:1px solid #a3a3a3;border-right:1px solid #a3a3a3"></div>
<div class="a" style="left:101px;top:700px;width:65px;height:2px;background:#217346;"></div>
<div class="t" style="left:113.50px;top:684.00px;font-size:13.5px;color:#217346;font-weight:700;letter-spacing:-0.830px;">Sheet1</div>
<svg style="left:198px;top:682px" width="18" height="18" viewBox="0 0 18 18" ><circle cx="8.8" cy="9" r="7.5" fill="none" stroke="#868686" stroke-width="1.1"/><path d="M8.8 5V13M4.8 9H12.8" stroke="#5a5a5a" stroke-width="1.7"/></svg>
<div class="a" style="left:597.5px;top:686px;width:1.5px;height:1.5px;background:#a8a8a8;"></div>
<div class="a" style="left:597.5px;top:689.5px;width:1.5px;height:1.5px;background:#a8a8a8;"></div>
<div class="a" style="left:597.5px;top:693px;width:1.5px;height:1.5px;background:#a8a8a8;"></div>
<div class="a" style="left:614px;top:684px;width:14px;height:14px;background:#fff;border:1px solid #ababab"></div>
<svg style="left:617px;top:687px" width="7" height="9" viewBox="0 0 7 9" ><path d="M5.6 0.8V8.2L1.2 4.5Z" fill="#666"/></svg>
<div class="a" style="left:628px;top:684px;width:308px;height:14px;background:#fff;border:1px solid #ababab"></div>
<div class="a" style="left:936px;top:684px;width:22px;height:14px;background:#d6d6d6;"></div>
<div class="a" style="left:958px;top:684px;width:15px;height:14px;background:#fff;border:1px solid #ababab"></div>
<svg style="left:962px;top:687px" width="7" height="9" viewBox="0 0 7 9" ><path d="M1.4 0.8V8.2L5.8 4.5Z" fill="#666"/></svg>
<div class="a" style="left:1px;top:705px;width:993px;height:22px;background:#f3f2f1;"></div>
<div class="a" style="left:1px;top:705px;width:993px;height:1px;background:#c8c8c8;"></div>
<div class="t" style="left:9.20px;top:711.00px;font-size:11.2px;color:#444;letter-spacing:-0.389px;">Ready</div>
<div class="t" style="left:55.40px;top:712.00px;font-size:11.2px;color:#444;letter-spacing:0.219px;">Workbook Statistics</div>
<svg style="left:177px;top:708px" width="16" height="16" viewBox="0 0 16 16" ><circle cx="6.5" cy="2.6" r="1.7" fill="none" stroke="#444" stroke-width="1"/><path d="M1 5.8C4 7 9 7 12 5.8 M4.8 6.8V10.5L3 14.5 M8.2 6.8V10L9 11.5" fill="none" stroke="#444" stroke-width="1" /><path d="M8.5 12L10.8 14.3L15 9.5" fill="none" stroke="#444" stroke-width="1.2" /></svg>
<div class="t" style="left:195.80px;top:712.00px;font-size:11.2px;color:#444;letter-spacing:0.160px;">Accessibility: Good to go</div>
<div class="t" style="left:620.50px;top:712.00px;font-size:11.2px;color:#444;letter-spacing:0.150px;">Count: 2</div>
<div class="a" style="left:683px;top:706px;width:40px;height:21px;background:#cbcbcb;"></div>
<svg style="left:696px;top:709px" width="14" height="14" viewBox="0 0 14 14" ><path d="M0.5 0.5H13.5V13.5H0.5ZM4.8 0.5V13.5M9.2 0.5V13.5M0.5 4.8H13.5M0.5 9.2H13.5" fill="none" stroke="#444" stroke-width="1" /></svg>
<svg style="left:736px;top:709px" width="15" height="14" viewBox="0 0 15 14" ><path d="M0.5 0.5H14.5V13.5H0.5Z" fill="none" stroke="#444" stroke-width="1" /><path d="M3.5 3.5H11.5V10.5H3.5ZM5.5 5.8H9.5M5.5 8.2H9.5" fill="none" stroke="#444" stroke-width="1" /></svg>
<svg style="left:775px;top:709px" width="16" height="14" viewBox="0 0 16 14" ><path d="M0.5 0.5H14.5V13.5H0.5Z M5.5 0.5V7.5H10.5V0.5" fill="none" stroke="#444" stroke-width="1" /></svg>
<div class="a" style="left:809px;top:716px;width:7px;height:1px;background:#444;"></div>
<div class="a" style="left:822px;top:716px;width:100px;height:1px;background:#666;"></div>
<div class="a" style="left:872px;top:712px;width:1px;height:9px;background:#666;"></div>
<div class="a" style="left:882px;top:710.5px;width:5px;height:12px;background:#555;"></div>
<div class="a" style="left:927px;top:716px;width:8px;height:1px;background:#444;"></div>
<div class="a" style="left:930.5px;top:712.5px;width:1px;height:8px;background:#444;"></div>
<div class="t" style="left:948.00px;top:712.00px;font-size:11.2px;color:#444;letter-spacing:-0.506px;">184%</div>
<div class="a" style="left:0px;top:35px;width:1px;height:693px;background:#217346;"></div>
<div class="a" style="left:0px;top:727px;width:995px;height:1px;background:#217346;"></div>
<div class="a" style="left:994px;top:35px;width:1px;height:693px;background:#217346;"></div>
</body></html>
